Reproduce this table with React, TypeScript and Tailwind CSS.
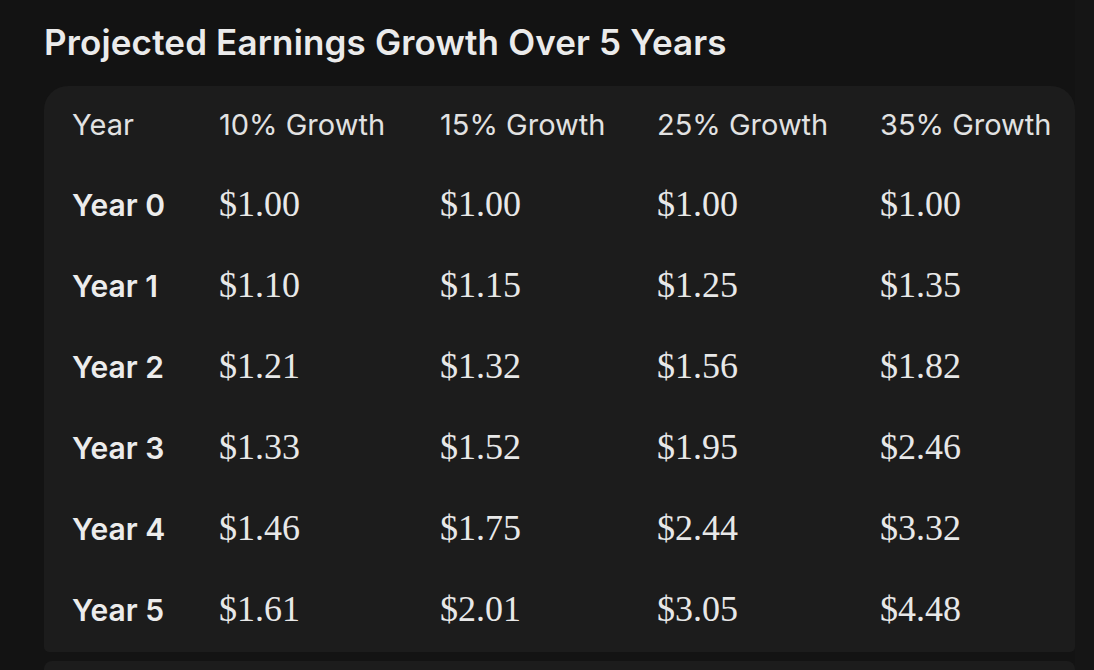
import React from "react";

type Row = { year: string; values: string[] };

const headers = ["Year", "10% Growth", "15% Growth", "25% Growth", "35% Growth"];

const rows: Row[] = [
    { year: "Year 0", values: ["$1.00", "$1.00", "$1.00", "$1.00"] },
    { year: "Year 1", values: ["$1.10", "$1.15", "$1.25", "$1.35"] },
    { year: "Year 2", values: ["$1.21", "$1.32", "$1.56", "$1.82"] },
    { year: "Year 3", values: ["$1.33", "$1.52", "$1.95", "$2.46"] },
    { year: "Year 4", values: ["$1.46", "$1.75", "$2.44", "$3.32"] },
    { year: "Year 5", values: ["$1.61", "$2.01", "$3.05", "$4.48"] },
];

const sans = "font-['Inter','Noto_Sans',sans-serif]";
const serif = "font-['Liberation_Serif','DejaVu_Serif',serif]";
const grid = "grid grid-cols-[147px_221px_217px_223px_1fr] items-center h-[81px] pl-7 pb-1";

export default function App() {
    return (
        <div className="w-[1094px] h-[670px] overflow-hidden bg-[#131313] flex">
            <div className="w-[1075px] flex flex-col pl-11">
                <h1 className={`${sans} text-[35px] font-semibold text-[#ebebeb] leading-none mt-[25px] mb-[26px] tracking-[0.15px]`}>
                    Projected Earnings Growth Over 5 Years
                </h1>

                <div className="bg-[#1c1c1c] rounded-t-[24px] rounded-b-[5px] h-[566px]">
                    <div className={`${grid} ${sans} text-[29px] text-[#e2e2e2]`}>
                        {headers.map((h) => (
                            <div key={h}>{h}</div>
                        ))}
                    </div>
                    {rows.map((r) => (
                        <div key={r.year} className={grid}>
                            <div className={`${sans} text-[30px] font-semibold text-[#ececec]`}>{r.year}</div>
                            {r.values.map((v, i) => (
                                <div key={i} className={`${serif} text-[36px] text-[#e8e8e8] -mt-1`}>{v}</div>
                            ))}
                        </div>
                    ))}
                </div>

                <div className="bg-[#1c1c1c] rounded-t-[8px] h-[20px] mt-[9px]"></div>
            </div>
            <div className="flex-1 bg-[#151515]"></div>
        </div>
    );
}
